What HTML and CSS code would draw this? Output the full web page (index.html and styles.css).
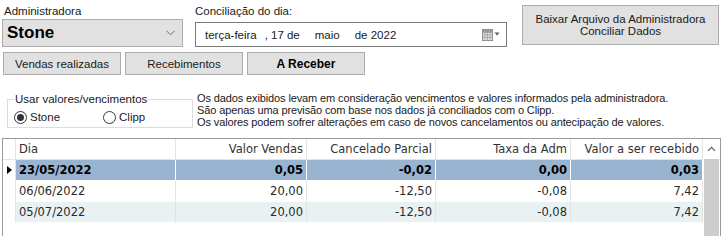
FILE: index.html
```html
<!DOCTYPE html>
<html lang="pt-BR">
<head>
<meta charset="utf-8">
<title>Conciliação</title>
<link rel="stylesheet" href="styles.css">
</head>
<body>
<div class="top">
  <div class="col-adm">
    <div class="label">Administradora</div>
    <div class="combo">
      <span class="combo-text">Stone</span>
      <svg class="chev" width="9" height="6" viewBox="0 0 9 6"><path d="M0.5 0.8 L4.5 4.8 L8.5 0.8" fill="none" stroke="#6b6b6b" stroke-width="1"/></svg>
    </div>
  </div>
  <div class="col-date">
    <div class="label">Conciliação do dia:</div>
    <div class="datebox">
      <span class="d1">terça-feira</span><span class="d2">,</span><span class="d3">17 de</span><span class="d4">maio</span><span class="d5">de 2022</span>
      <svg class="cal" width="18" height="12" viewBox="0 0 18 12">
        <rect x="0.5" y="0.5" width="10" height="11" fill="#e8e8e8" stroke="#8a8a8a"/>
        <path d="M0.5 3.5 H10.5 M0.5 6 H10.5 M0.5 8.5 H10.5 M3 3.5 V11.5 M5.5 3.5 V11.5 M8 3.5 V11.5" stroke="#a8a8a8" stroke-width="1"/>
        <rect x="0.5" y="0.5" width="10" height="3" fill="#9a9a9a"/>
        <path d="M12.5 3.5 H17.5 L15 6.5 Z" fill="#4a5f80"/>
      </svg>
    </div>
  </div>
  <button class="big-btn">Baixar Arquivo da Administradora<br>Conciliar Dados</button>
</div>

<div class="tabs">
  <button class="btn">Vendas realizadas</button>
  <button class="btn">Recebimentos</button>
  <button class="btn bold">A Receber</button>
</div>

<div class="options">
  <fieldset class="group">
    <legend>Usar valores/vencimentos</legend>
    <div class="radios">
      <label class="radio"><span class="circle on"></span>Stone</label>
      <label class="radio r2"><span class="circle"></span>Clipp</label>
    </div>
  </fieldset>
  <div class="info">
    <div>Os dados exibidos levam em consideração vencimentos e valores informados pela administradora.</div>
    <div>São apenas uma previsão com base nos dados já conciliados com o Clipp.</div>
    <div>Os valores podem sofrer alterações em caso de novos cancelamentos ou antecipação de valores.</div>
  </div>
</div>

<div class="grid">
  <div class="grid-body">
    <div class="row head">
      <div class="cell ind"></div>
      <div class="cell">Dia</div>
      <div class="cell num">Valor Vendas</div>
      <div class="cell num">Cancelado Parcial</div>
      <div class="cell num">Taxa da Adm</div>
      <div class="cell num">Valor a ser recebido</div>
    </div>
    <div class="row sel">
      <div class="cell ind"><span class="tri"></span></div>
      <div class="cell">23/05/2022</div>
      <div class="cell num">0,05</div>
      <div class="cell num">-0,02</div>
      <div class="cell num">0,00</div>
      <div class="cell num">0,03</div>
    </div>
    <div class="row">
      <div class="cell ind"></div>
      <div class="cell">06/06/2022</div>
      <div class="cell num">20,00</div>
      <div class="cell num">-12,50</div>
      <div class="cell num">-0,08</div>
      <div class="cell num">7,42</div>
    </div>
    <div class="row alt">
      <div class="cell ind"></div>
      <div class="cell">05/07/2022</div>
      <div class="cell num">20,00</div>
      <div class="cell num">-12,50</div>
      <div class="cell num">-0,08</div>
      <div class="cell num">7,42</div>
    </div>
  </div>
  <div class="scroll">
    <div class="arrow"><svg width="9" height="6" viewBox="0 0 9 6"><path d="M1 4.8 L4.5 1.3 L8 4.8" fill="none" stroke="#606060" stroke-width="1.2"/></svg></div>
    <div class="thumb"></div>
  </div>
</div>
</body>
</html>
```
FILE: styles.css
```css
* { box-sizing: border-box; }
html, body { margin: 0; padding: 0; background: #ffffff; overflow: hidden; }
body {
  width: 723px; height: 236px;
  font-family: "Liberation Sans", Arial, sans-serif;
  font-size: 11.5px;
  color: #1a1a1a;
}
.top { display: flex; padding: 4px 0 0 2px; }
.label { line-height: 14px; height: 14px; padding-left: 2px; }
.col-adm { width: 181px; }
.combo {
  margin-top: 1px; height: 28px;
  background: #e1e1e1; border: 1px solid #adadad;
  display: flex; align-items: center; justify-content: space-between;
  padding: 0 7px 0 4px;
}
.combo-text { font-weight: bold; font-size: 17px; color: #000; }
.col-date { margin-left: 12px; width: 312px; }
.col-date .label { padding-left: 0; }
.datebox {
  margin-top: 4px; height: 25px;
  border: 1px solid #7a7a7a; background: #fff;
  display: flex; align-items: center; padding-left: 9px;
}
.d2 { margin-left: 8px; }
.d3 { margin-left: 3px; }
.d4 { margin-left: 15px; }
.d5 { margin-left: 15px; }
.cal { margin-left: auto; margin-right: 6px; }
button { font-family: inherit; font-size: inherit; color: #1a1a1a; }
.big-btn {
  margin: 1px 0 0 15px; width: 197px; height: 40px;
  background: #e1e1e1; border: 1px solid #adadad; line-height: 12px; padding: 0;
}
.tabs { display: flex; gap: 4px; padding-left: 3px; margin-top: 5px; }
.btn {
  width: 118px; height: 23px; padding: 0;
  background: #e1e1e1; border: 1px solid #adadad;
}
.btn.bold { font-weight: bold; font-size: 12px; color: #000; }
.options { display: flex; margin-top: 17px; }
.group {
  margin: 0 0 0 7px; padding: 0; width: 186px; height: 36px;
  border: 1px solid #dcdcdc;
}
.group legend { padding: 0 1px; margin-left: 6px; line-height: 14px; }
.radios { display: flex; padding: 4px 0 0 6px; }
.radio { display: flex; align-items: center; line-height: 14px; }
.r2 { margin-left: 43px; }
.circle {
  width: 13px; height: 13px; border: 1px solid #333; border-radius: 50%;
  margin-right: 3px; display: flex; align-items: center; justify-content: center;
}
.circle.on::after { content: ""; width: 7px; height: 7px; border-radius: 50%; background: #333; }
.info { margin-left: 4px; line-height: 12px; font-size: 11px; letter-spacing: -0.12px; }
.grid {
  margin: 10px 0 0 2px; width: 719px; height: 99px;
  border: 1px solid #9a9a9a; display: flex; background: #fff;
}
.grid-body {
  width: 700px;
  font-family: "DejaVu Sans", Verdana, sans-serif; font-size: 11.5px; color: #2a2a2a;
}
.row { display: grid; grid-template-columns: 13px 160px 131px 129px 135px 132px; height: 21px; }
.cell {
  border-right: 1px solid #e3e3e3; border-bottom: 1px solid #ffffff;
  line-height: 20px; padding: 0 3px; white-space: nowrap; overflow: hidden;
}
.head .cell { border-bottom: 1px solid #e3e3e3; color: #333; }
.num { text-align: right; }
.ind { padding: 0; display: flex; align-items: center; justify-content: center; background: #fff; }
.sel .cell { background: #99b4d1; font-weight: bold; color: #000; border-right-color: #fff; }
.sel .ind { background: #fff; border-right-color: #e3e3e3; }
.alt .cell { background: #e9f2f3; }
.alt .ind { background: #fff; }
.tri { width: 0; height: 0; border-left: 5px solid #000; border-top: 4.5px solid transparent; border-bottom: 4.5px solid transparent; margin-left: 1px; }
.scroll { width: 17px; display: flex; flex-direction: column; }
.arrow { height: 20px; display: flex; align-items: center; justify-content: center; }
.thumb { flex: 1; background: #cdcdcd; margin: 0 1px 0 1px; }
```
